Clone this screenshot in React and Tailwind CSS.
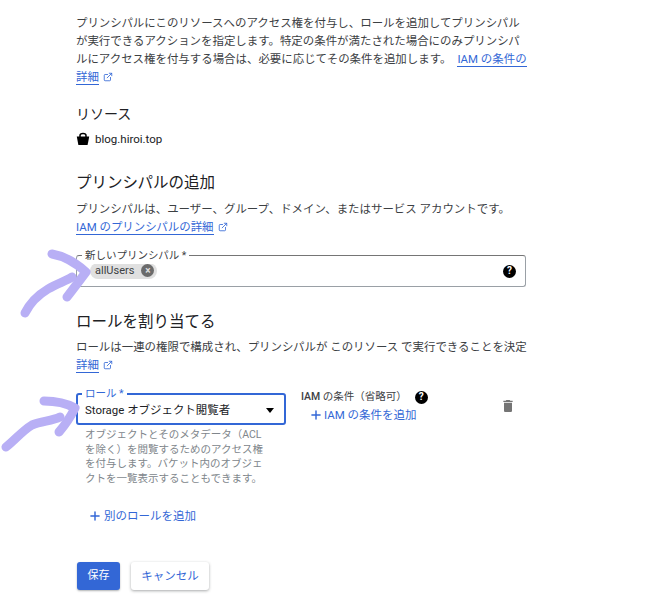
import React from 'react';
import { ExternalLink, Plus } from 'lucide-react';

const font = 'font-["Roboto","Noto_Sans_CJK_JP",sans-serif]';

function BucketIcon() {
  return (
    <svg width="14" height="14" viewBox="0 0 14 14" className="shrink-0">
      <path d="M4 5V3.5C4 2.2 5.2 1.5 7 1.5s3 .7 3 2V5" fill="none" stroke="#000" strokeWidth="1.5" />
      <path d="M.8 4.6h12.4L11.6 13H2.4z" fill="#000" />
    </svg>
  );
}

function HelpIcon({ size = 13 }) {
  return (
    <span
      className="flex shrink-0 items-center justify-center rounded-full bg-black font-bold text-white"
      style={{ width: size, height: size, fontSize: size - 3 }}
    >
      ?
    </span>
  );
}

function DeleteIcon() {
  return (
    <svg width="16" height="16" viewBox="0 0 24 24" fill="#757575" className="ml-[7px] mt-[5px] shrink-0">
      <path d="M6 19c0 1.1.9 2 2 2h8c1.1 0 2-.9 2-2V7H6v12zM19 4h-3.5l-1-1h-5l-1 1H5v2h14V4z" />
    </svg>
  );
}

// hand drawn marker arrows over the page
function Arrows() {
  return (
    <svg width="110" height="220" viewBox="0 0 110 220" className="pointer-events-none absolute left-0 top-[245px]" fill="none" stroke="#b8aff5" strokeWidth="9" strokeLinecap="round" strokeLinejoin="round">
      <path d="M52 9 C64 11 76 18 86 27 C80 35 74 43 67 52" />
      <path d="M25 68 C30 58 38 50 48 44 C58 38 66 36 72 32" />
      <path d="M44 156 C55 156 66 158 75 163 C70 173 65 180 59 187" />
      <path d="M6 202 C14 196 22 186 32 180 C42 176 52 176 60 172" />
    </svg>
  );
}

export default function App() {
  return (
    <div className={`relative h-[611px] w-[660px] overflow-hidden bg-white pl-[76px] pr-[130px] pt-[14px] text-[11.45px] leading-[18px] text-[#3c4043] ${font}`}>
      <p>
        プリンシパルにこのリソースへのアクセス権を付与し、ロールを追加してプリンシパルが実行できるアクションを指定します。特定の条件が満たされた場合にのみプリンシパルにアクセス権を付与する場合は、必要に応じてその条件を追加します。
        <a className="ml-1.5 border-b border-[#3367d6] text-[#3367d6]">IAM の条件の</a>
        <br />
        <a className="border-b border-[#3367d6] text-[#3367d6]">詳細</a>
        <ExternalLink size={10} className="ml-1 inline align-[-1px] text-[#3367d6]" />
      </p>

      <h3 className="mt-[18px] text-[14px] leading-5 text-[#202124]">リソース</h3>
      <div className="mt-[6px] flex items-center gap-[5px] text-[11.5px] text-[#202124]">
        <BucketIcon />
        <span>blog.hiroi.top</span>
      </div>

      <h2 className="mt-[23px] text-[15.5px] leading-6 text-[#202124]">プリンシパルの追加</h2>
      <p className="mt-[5px]">プリンシパルは、ユーザー、グループ、ドメイン、またはサービス アカウントです。</p>
      <p>
        <a className="border-b border-[#3367d6] text-[#3367d6]">IAM のプリンシパルの詳細</a>
        <ExternalLink size={10} className="ml-1 inline align-[-1px] text-[#3367d6]" />
      </p>

      <div className="relative mt-[19px] flex h-[32px] w-[450px] items-center justify-between rounded-[3px] border border-[#9aa0a6] border-t-[#757575] pl-[13px] pr-[9px]">
        <span className="absolute left-[5px] top-[-8px] bg-white px-[3px] text-[10.5px] leading-[16px] text-[#3c4043]">新しいプリンシパル *</span>
        <span className="mt-[-1px] flex h-[16px] items-center gap-[7px] rounded-full bg-[#e0e0e0] pl-[5px] pr-[3px] text-[11px] text-[#3c4043]">
          allUsers
          <span className="flex h-[13px] w-[13px] items-center justify-center rounded-full bg-[#6b6b6b] text-[10px] font-bold leading-none text-[#e0e0e0]">×</span>
        </span>
        <HelpIcon />
      </div>

      <h2 className="mt-[23px] text-[15.5px] leading-6 text-[#202124]">ロールを割り当てる</h2>
      <p className="mt-[4px]">ロールは一連の権限で構成され、プリンシパルが このリソース で実行できることを決定</p>
      <p>
        <a className="border-b border-[#3367d6] text-[#3367d6]">詳細</a>
        <ExternalLink size={10} className="ml-1 inline align-[-1px] text-[#3367d6]" />
      </p>

      <div className="mt-[19px] flex">
        <div className="w-[210px]">
          <div className="relative flex h-[32px] items-center justify-between rounded-[3px] border-2 border-[#3367d6] pl-[7px] pr-[10px] pt-[2px] text-[#202124]">
            <span className="absolute left-[4px] top-[-9px] bg-white px-[3px] text-[10.5px] leading-[16px] text-[#3367d6]">ロール *</span>
            <span>Storage オブジェクト閲覧者</span>
            <span className="h-0 w-0 border-x-[4.5px] border-t-[5px] border-x-transparent border-t-black" />
          </div>
          <p className="mt-[3px] pl-[9px] pr-[21px] text-[10.5px] leading-[14.5px] text-[#80868b]">
            オブジェクトとそのメタデータ（ACL を除く）を閲覧するためのアクセス権を付与します。バケット内のオブジェクトを一覧表示することもできます。
          </p>
        </div>
        <div className="ml-[15px] mt-[-5px] w-[192px]">
          <div className="flex items-center gap-[8px] text-[10.5px] text-[#3c4043]">
            <span><span className="font-medium">IAM</span> の条件（省略可）</span>
            <HelpIcon />
          </div>
          <button className="flex items-center gap-[1px] pl-[8px] text-[11.5px] text-[#3367d6]">
            <Plus size={14} strokeWidth={2.5} />
            IAM の条件を追加
          </button>
        </div>
        <DeleteIcon />
      </div>

      <button className="mt-[21px] flex items-center gap-[2px] pl-[12px] text-[11.5px] text-[#3367d6]">
        <Plus size={14} strokeWidth={2.5} />
        別のロールを追加
      </button>

      <div className="mt-[37px] flex gap-[11px] pl-[1px]">
        <button className="h-[28px] w-[43px] rounded-[3px] bg-[#3367d6] text-[11px] text-white shadow-[0_1px_2px_rgba(60,64,67,0.4)]">保存</button>
        <button className="h-[28px] w-[78px] rounded-[3px] bg-white text-[11.5px] text-[#3367d6] shadow-[0_1px_3px_rgba(60,64,67,0.45)]">キャンセル</button>
      </div>

      <Arrows />
    </div>
  );
}
